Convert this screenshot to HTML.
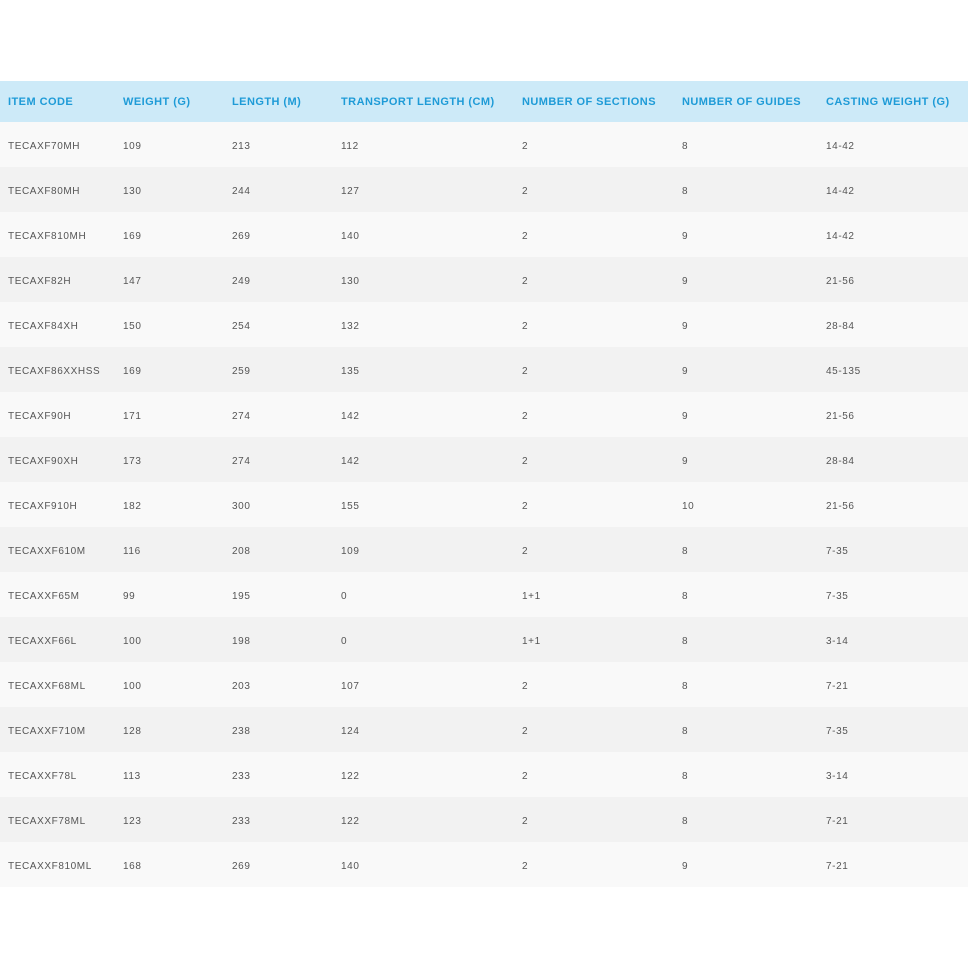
<!DOCTYPE html>
<html><head><style>
body{margin:0;background:#fff;font-family:"Liberation Sans",Arial,sans-serif;}
table{position:absolute;top:81px;left:0;width:968px;border-collapse:collapse;table-layout:fixed;}
th{background:#cdeaf8;color:#1e9bd7;font-size:11px;font-weight:bold;letter-spacing:0.45px;text-align:left;height:41px;padding:0 0 0 8px;white-space:nowrap;box-sizing:border-box;}
td{font-size:10px;color:#555;letter-spacing:0.6px;height:45px;padding:4px 0 0 8px;white-space:nowrap;box-sizing:border-box;}
tr:nth-child(odd) td{background:#f9f9f9}
tr:nth-child(even) td{background:#f2f2f2}
</style></head><body>
<table>
<colgroup><col style="width:115px"><col style="width:109px"><col style="width:109px"><col style="width:181px"><col style="width:160px"><col style="width:144px"><col></colgroup>
<thead><tr><th>ITEM CODE</th><th>WEIGHT (G)</th><th>LENGTH (M)</th><th>TRANSPORT LENGTH (CM)</th><th>NUMBER OF SECTIONS</th><th>NUMBER OF GUIDES</th><th>CASTING WEIGHT (G)</th></tr></thead>
<tbody>
<tr><td>TECAXF70MH</td><td>109</td><td>213</td><td>112</td><td>2</td><td>8</td><td>14-42</td></tr>
<tr><td>TECAXF80MH</td><td>130</td><td>244</td><td>127</td><td>2</td><td>8</td><td>14-42</td></tr>
<tr><td>TECAXF810MH</td><td>169</td><td>269</td><td>140</td><td>2</td><td>9</td><td>14-42</td></tr>
<tr><td>TECAXF82H</td><td>147</td><td>249</td><td>130</td><td>2</td><td>9</td><td>21-56</td></tr>
<tr><td>TECAXF84XH</td><td>150</td><td>254</td><td>132</td><td>2</td><td>9</td><td>28-84</td></tr>
<tr><td>TECAXF86XXHSS</td><td>169</td><td>259</td><td>135</td><td>2</td><td>9</td><td>45-135</td></tr>
<tr><td>TECAXF90H</td><td>171</td><td>274</td><td>142</td><td>2</td><td>9</td><td>21-56</td></tr>
<tr><td>TECAXF90XH</td><td>173</td><td>274</td><td>142</td><td>2</td><td>9</td><td>28-84</td></tr>
<tr><td>TECAXF910H</td><td>182</td><td>300</td><td>155</td><td>2</td><td>10</td><td>21-56</td></tr>
<tr><td>TECAXXF610M</td><td>116</td><td>208</td><td>109</td><td>2</td><td>8</td><td>7-35</td></tr>
<tr><td>TECAXXF65M</td><td>99</td><td>195</td><td>0</td><td>1+1</td><td>8</td><td>7-35</td></tr>
<tr><td>TECAXXF66L</td><td>100</td><td>198</td><td>0</td><td>1+1</td><td>8</td><td>3-14</td></tr>
<tr><td>TECAXXF68ML</td><td>100</td><td>203</td><td>107</td><td>2</td><td>8</td><td>7-21</td></tr>
<tr><td>TECAXXF710M</td><td>128</td><td>238</td><td>124</td><td>2</td><td>8</td><td>7-35</td></tr>
<tr><td>TECAXXF78L</td><td>113</td><td>233</td><td>122</td><td>2</td><td>8</td><td>3-14</td></tr>
<tr><td>TECAXXF78ML</td><td>123</td><td>233</td><td>122</td><td>2</td><td>8</td><td>7-21</td></tr>
<tr><td>TECAXXF810ML</td><td>168</td><td>269</td><td>140</td><td>2</td><td>9</td><td>7-21</td></tr>
</tbody></table>
</body></html>
